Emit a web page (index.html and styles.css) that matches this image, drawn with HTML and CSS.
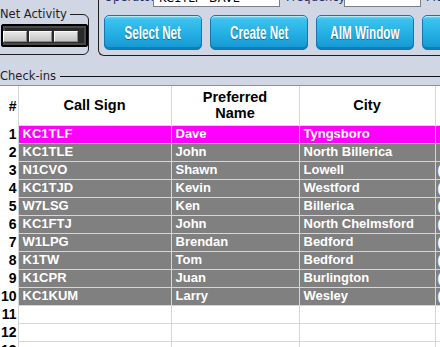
FILE: index.html
```html
<!DOCTYPE html>
<html lang="en">
<head>
    <meta charset="UTF-8">
    <title>Net Control</title>
    <link rel="stylesheet" href="styles.css">
</head>
<body>
    <div class="top">
        <div class="activity">
            <span class="grouplabel">Net Activity</span>
            <div class="lights">
                <span class="light"></span>
                <span class="light"></span>
                <span class="light"></span>
            </div>
        </div>
        <div class="controls">
            <div class="fields">
                <span class="lbl">Operator</span>
                <span class="inp op">KC1TLF -DAVE</span>
                <span class="lbl freq">Frequency</span>
                <span class="inp fq"></span>
                <span class="lbl">Mode</span>
            </div>
            <div class="buttons">
                <button class="btn"><span>Select Net</span></button>
                <button class="btn"><span>Create Net</span></button>
                <button class="btn"><span>AIM Window</span></button>
                <button class="btn"><span>View Log</span></button>
            </div>
        </div>
    </div>

    <div class="checkins">
        <span class="checklabel">Check-ins</span>
        <span class="rule"></span>
    </div>

    <div class="grid">
        <table>
            <colgroup>
                <col class="c-num">
                <col class="c-call">
                <col class="c-name">
                <col class="c-city">
                <col class="c-phone">
            </colgroup>
            <thead>
                <tr>
                    <th class="num">#</th>
                    <th>Call Sign</th>
                    <th>Preferred<br>Name</th>
                    <th>City</th>
                    <th>Phone</th>
                </tr>
            </thead>
            <tbody>
                <tr class="active"><td class="num">1</td><td>KC1TLF</td><td>Dave</td><td>Tyngsboro</td><td></td></tr>
                <tr class="in"><td class="num">2</td><td>KC1TLE</td><td>John</td><td>North Billerica</td><td></td></tr>
                <tr class="in"><td class="num">3</td><td>N1CVO</td><td>Shawn</td><td>Lowell</td><td>(978)</td></tr>
                <tr class="in"><td class="num">4</td><td>KC1TJD</td><td>Kevin</td><td>Westford</td><td>(978)</td></tr>
                <tr class="in"><td class="num">5</td><td>W7LSG</td><td>Ken</td><td>Billerica</td><td>(978)</td></tr>
                <tr class="in"><td class="num">6</td><td>KC1FTJ</td><td>John</td><td>North Chelmsford</td><td>(978)</td></tr>
                <tr class="in"><td class="num">7</td><td>W1LPG</td><td>Brendan</td><td>Bedford</td><td>(781)</td></tr>
                <tr class="in"><td class="num">8</td><td>K1TW</td><td>Tom</td><td>Bedford</td><td>(781)</td></tr>
                <tr class="in"><td class="num">9</td><td>K1CPR</td><td>Juan</td><td>Burlington</td><td>(781)</td></tr>
                <tr class="in"><td class="num">10</td><td>KC1KUM</td><td>Larry</td><td>Wesley</td><td>(781)</td></tr>
                <tr><td class="num">11</td><td></td><td></td><td></td><td></td></tr>
                <tr><td class="num">12</td><td></td><td></td><td></td><td></td></tr>
                <tr><td class="num">13</td><td></td><td></td><td></td><td></td></tr>
            </tbody>
        </table>
    </div>
</body>
</html>
```

FILE: styles.css
```css
*{
    margin:0;
    padding:0;
    box-sizing:border-box;
}
body{
    width:440px;
    height:347px;
    overflow:hidden;
    background:#d1d6e4;
    font-family:"Liberation Sans", Arial, sans-serif;
    font-size:12px;
    color:#000;
}
/* top bar */
.top{
    display:flex;
    height:67px;
    align-items:flex-start;
}
.activity{
    position:relative;
    margin:14px 0 0 -12px;
    width:103px;
    height:41px;
    border:1px solid #1e1e1e;
    border-radius:6px;
    padding:9px 0 0 12px;
}
.grouplabel{
    position:absolute;
    top:-8px;
    left:11px;
    padding-right:3px;
    background:#d1d6e4;
    line-height:14px;
    font-family:"DejaVu Sans", sans-serif;
    font-size:11.5px;
    color:#1d1d2a;
}
.lights{
    display:flex;
    gap:2px;
    width:87px;
    height:23px;
    padding:6px 9px 4px 1px;
    background:#2a2a2a;
    border:1px solid #000;
    border-radius:2px;
    box-shadow:inset 0 0 0 1px #000, inset 0 0 0 3px #4a4a4a;
}
.light{
    flex:1;
    background:linear-gradient(#e6e6e6,#c4c4c4);
    border:1px solid #8a8a8a;
    border-top-color:#fafafa;
    border-left-color:#fafafa;
}
.controls{
    margin:-20px 0 0 9px;
    flex:1;
    height:76px;
    border:1px solid #1e1e1e;
    border-right:none;
    border-radius:6px 0 0 6px;
    padding:5px 0 0 5px;
}
.fields{
    display:flex;
    align-items:center;
    height:22px;
    font-family:"DejaVu Sans", sans-serif;
    font-size:11.5px;
    white-space:nowrap;
}
.lbl{
    color:#1b2b66;
}
.fields .lbl:first-child{
    width:49px;
}
.inp{
    height:19px;
    background:#fff;
    border:1px solid #7a7f8c;
    padding:2px 0 0 5px;
    color:#000;
}
.op{
    width:127px;
}
.freq{
    margin-left:6px;
    width:58px;
}
.fq{
    width:77px;
    margin-right:5px;
}
.buttons{
    display:flex;
    gap:8px;
    margin-top:7px;
}
.btn{
    flex:none;
    display:flex;
    align-items:center;
    justify-content:center;
    width:98px;
    height:35px;
    border:1px solid #1478ad;
    border-radius:5px;
    background:linear-gradient(#74d8f7 0,#3cc2ee 10%,#24aee3 55%,#1697d2 100%);
    box-shadow:inset 0 -2px 0 #0f7fb7, inset 0 1px 0 #b0ecfc;
    color:#fff;
    font-family:"Liberation Sans", sans-serif;
    font-weight:bold;
    font-size:18.5px;
    text-shadow:0 1px 1px #0d6d9e;
    white-space:nowrap;
    overflow:hidden;
}
.btn span{
    display:inline-block;
    transform:scaleX(0.63);
}
/* check-ins */
.checkins{
    display:flex;
    align-items:center;
    height:18px;
}
.checklabel{
    font-family:"DejaVu Sans", sans-serif;
    font-size:11.5px;
    color:#1d1d2a;
    padding-right:4px;
}
.rule{
    flex:1;
    height:1px;
    background:#111;
}
.grid{
    border-top:1px solid #8c8f9c;
    background:#fff;
    height:300px;
    overflow:hidden;
}
table{
    border-collapse:collapse;
    table-layout:fixed;
    width:535px;
    font-size:13px;
    font-weight:bold;
}
.c-num{ width:18px; }
.c-call{ width:153px; }
.c-name{ width:128px; }
.c-city{ width:136px; }
.c-phone{ width:100px; }
th{
    height:39px;
    font-size:14.5px;
    font-weight:bold;
    line-height:16px;
    border-left:1px solid #d6d6d6;
    text-align:center;
}
td{
    height:18px;
    border-left:1px solid #d6d6d6;
    border-top:1px solid #d6d6d6;
    padding:0 0 0 4px;
    white-space:nowrap;
    overflow:hidden;
    line-height:16px;
}
td:last-child{
    padding-left:2px;
}
td.num, th.num{
    text-align:right;
    padding:0 1px 0 0;
    border-top:none;
    border-left:none;
    font-size:14px;
    color:#000;
    background:#fff;
}
tr.active td{
    background:#ff00ff;
    color:#fff;
}
tr.in td{
    background:#808080;
    color:#fff;
}
tr.active td.num, tr.in td.num{
    background:#fff;
    color:#000;
}
```
